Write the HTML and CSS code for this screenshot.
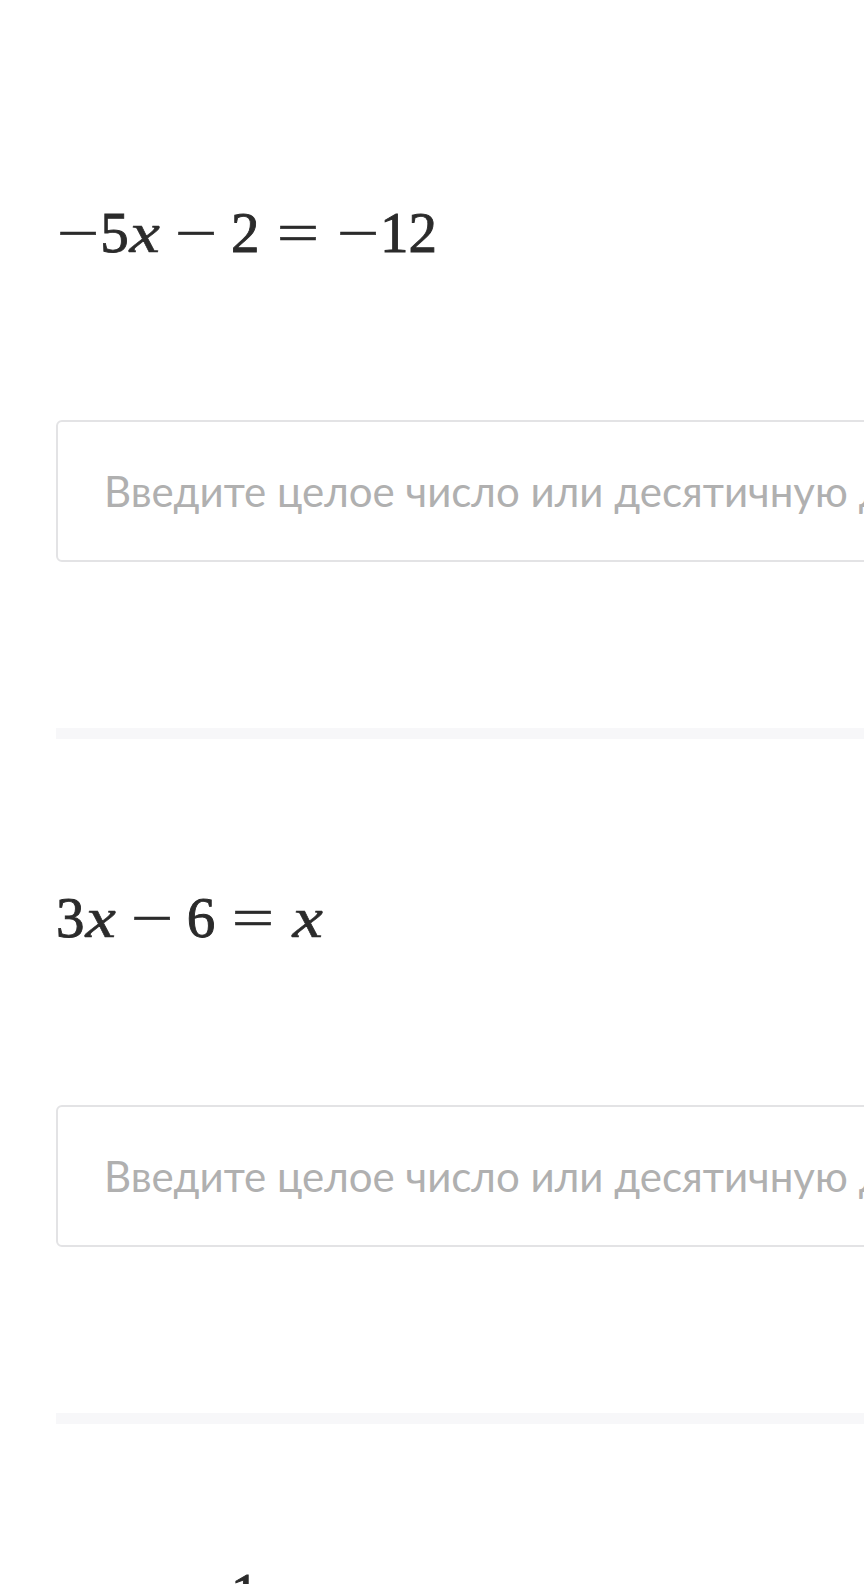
FILE: index.html
```html
<!DOCTYPE html>
<html lang="ru">
<head>
    <meta charset="UTF-8">
    <meta name="viewport" content="width=device-width, initial-scale=1.0">
    <title>Упражнение</title>
    <link rel="stylesheet" href="styles.css">
</head>
<body>
    <div class="page">
        <div class="item">
            <div class="eq">
                <span class="mo"><span>−</span></span><span class="mn">5</span><span class="mi"><i>x</i></span><span class="bin"></span><span class="mo"><span>−</span></span><span class="bin"></span><span class="mn">2</span><span class="rel"></span><span class="mo"><span>=</span></span><span class="rel"></span><span class="mo"><span>−</span></span><span class="mn">1</span><span class="mn">2</span>
            </div>
            <input type="text" class="answer" placeholder="Введите целое число или десятичную дробь">
            <div class="separator"></div>
        </div>

        <div class="item">
            <div class="eq">
                <span class="mn">3</span><span class="mi"><i>x</i></span><span class="bin"></span><span class="mo"><span>−</span></span><span class="bin"></span><span class="mn">6</span><span class="rel"></span><span class="mo"><span>=</span></span><span class="rel"></span><span class="mi"><i>x</i></span>
            </div>
            <input type="text" class="answer" placeholder="Введите целое число или десятичную дробь">
            <div class="separator"></div>
        </div>

        <div class="item">
            <!-- next task, only the top of its fraction is on screen -->
            <div class="eq eq-cut">
                <span class="frac"><span class="num"><span class="mn">1</span></span></span>
            </div>
        </div>
    </div>
</body>
</html>
```

FILE: styles.css
```css
html, body {
    margin: 0;
    overflow: hidden;
    background: #ffffff;
}

.page {
    width: 1200px;
    padding: 55px 0 0 56px;
}

.item {
    display: flex;
    flex-direction: column;
    align-items: flex-start;
    padding-top: 138px;
}

.item + .item {
    padding-top: 139px;
}

/* equation line, spacing follows the TeX mu widths */
.eq {
    font-family: "Liberation Serif", serif;
    font-size: 57px;
    line-height: 80px;
    height: 80px;
    color: #2b2b2b;
    white-space: nowrap;
}

.eq span {
    display: inline-block;
    text-align: center;
    line-height: 1;
}

.mn {
    width: 0.5em;
    -webkit-text-stroke: 0.9px #2b2b2b;
}

.mi {
    width: 0.572em;
    -webkit-text-stroke: 0.6px #2b2b2b;
}

.mi i {
    display: inline-block;
    transform: scaleX(1.2);
}

.eq .mo {
    width: 0.778em;
}

.eq .mo span {
    transform: scaleX(1.32);
    -webkit-text-stroke: 0.5px #2b2b2b;
}

.eq .bin {
    width: 0.222em;
}

.eq .rel {
    width: 0.278em;
}

.eq-cut {
    padding-left: 168px;
}

.eq .frac {
    display: inline-flex;
    flex-direction: column;
    align-items: center;
    vertical-align: 36px;
    padding: 0 0.12em;
}

.eq .num {
    line-height: 1.1;
}

.answer {
    box-sizing: border-box;
    width: 900px;
    height: 142px;
    margin: 147px 0 0;
    padding: 0 0 0 46px;
    border: 2px solid #e3e3e5;
    border-radius: 6px;
    background: #ffffff;
    font-family: Lato, "Open Sans", sans-serif;
    font-size: 42px;
    color: #2b2b2b;
    outline: none;
}

.answer::placeholder {
    color: #b0b0b0;
}

.separator {
    width: 900px;
    height: 11px;
    margin-top: 166px;
    background: #f7f7f9;
}
```
